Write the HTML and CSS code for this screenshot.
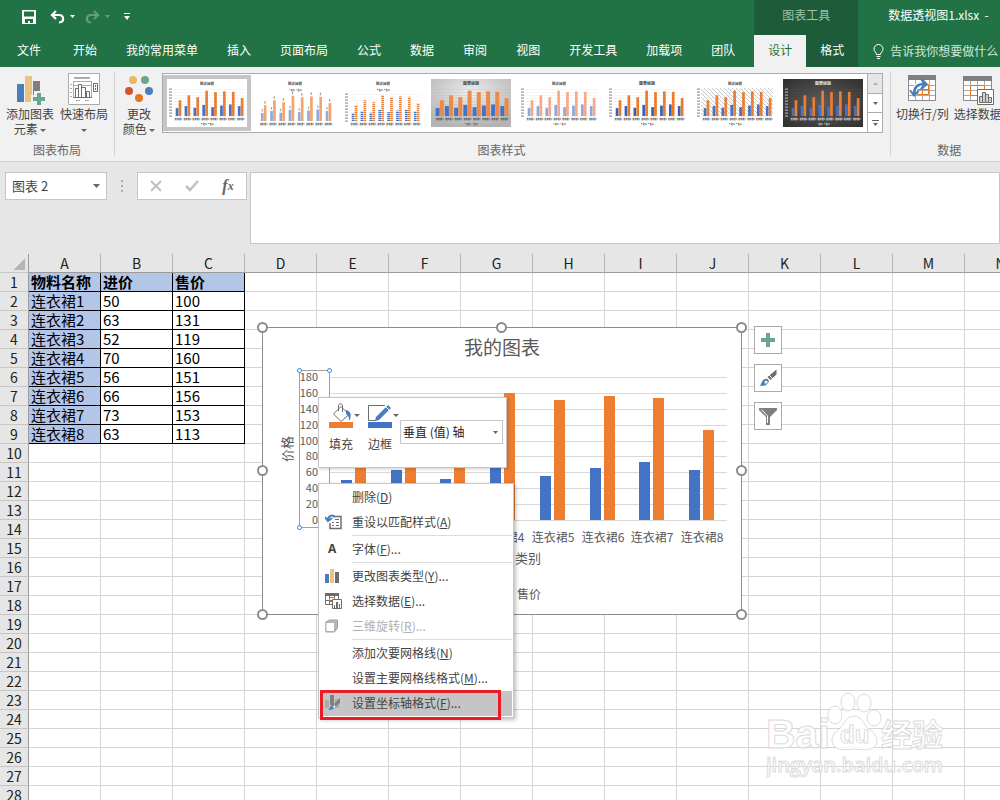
FILE: index.html
```html
<!DOCTYPE html>
<html lang="zh-CN">
<head>
    <meta charset="UTF-8">
    <meta name="viewport" content="width=device-width, initial-scale=1.0">
    <title>数据透视图1.xlsx</title>
    <link rel="stylesheet" href="styles.css">
</head>
<body>

    <header class="titlebar">
        <div class="title-left">
            <div class="quick-access">
                <button class="qa-btn" aria-label="保存">
                    <svg width="14" height="14" viewBox="0 0 14 14"><path fill="#fff" fill-rule="evenodd" d="M0 0h14v14H0zM2 1.500v5h10v-5zM3 9v4h3v-2h2v2h3V9z"/></svg>
                </button>
                <button class="qa-btn" aria-label="撤消">
                    <svg width="15" height="14" viewBox="0 0 15 14"><path d="M6 1L2 5l4 4M2 5h7c5 0 6 7 0 7.500" fill="none" stroke="#fff" stroke-width="2.200"/></svg>
                    <svg class="caret" width="5" height="3" viewBox="0 0 5 3"><path d="M0 0h5L2.500 3z"/></svg>
                </button>
                <button class="qa-btn dim" aria-label="恢复">
                    <svg width="15" height="14" viewBox="0 0 15 14"><path d="M9 1l4 4-4 4M13 5H6C1 5 0 12 6 12.500" fill="none" stroke="#fff" stroke-width="2.200"/></svg>
                    <svg class="caret" width="5" height="3" viewBox="0 0 5 3"><path d="M0 0h5L2.500 3z"/></svg>
                </button>
                <button class="qa-btn" aria-label="自定义快速访问工具栏">
                    <svg width="6" height="7" viewBox="0 0 6 7" fill="#fff"><path d="M0 0h6v1H0zM0 3h6L3 7z"/></svg>
                </button>
            </div>
            <nav class="tabs">
                <a class="tab tab-file" href="#">文件</a>
                <a class="tab" href="#">开始</a>
                <a class="tab" href="#">我的常用菜单</a>
                <a class="tab" href="#">插入</a>
                <a class="tab" href="#">页面布局</a>
                <a class="tab" href="#">公式</a>
                <a class="tab" href="#">数据</a>
                <a class="tab" href="#">审阅</a>
                <a class="tab" href="#">视图</a>
                <a class="tab" href="#">开发工具</a>
                <a class="tab" href="#">加载项</a>
                <a class="tab" href="#">团队</a>
            </nav>
        </div>
        <div class="title-context">
            <div class="context-name">图表工具</div>
            <nav class="context-tabs">
                <a class="context-tab active" href="#">设计</a>
                <a class="context-tab" href="#">格式</a>
            </nav>
        </div>
        <div class="title-right">
            <div class="doc-name">数据透视图1.xlsx &nbsp;-</div>
            <label class="tell-me">
                <svg width="11" height="15" viewBox="0 0 11 15" fill="none" stroke="#fff"><path d="M3.500 10.500c0-2-2.500-3-2.500-5.500a4.500 4.500 0 0 1 9 0c0 2.500-2.500 3.500-2.500 5.500zM3.500 12.500h4M4 14.500h3"/></svg>
                <input type="text" placeholder="告诉我你想要做什么" aria-label="告诉我你想要做什么">
            </label>
        </div>
    </header>

    <section class="ribbon">
        <div class="group">
            <div class="group-body">
                <button class="big-btn">
                    <svg width="30" height="32" viewBox="0 0 30 32">
                        <path fill="#4a7ebb" d="M2 11h7v18H2z"/><path fill="#eac282" d="M10 3h7v26h-7z"/><path fill="#7f7f7f" d="M18 8h7v21h-7z"/>
                        <path fill="#f1f1f1" d="M19 18h7v4h4v7h-4v3h-7v-3h-3v-7h3z"/>
                        <path fill="#6aa58f" d="M22 20h4v4h4v4h-4v4h-4v-4h-4v-4h4z"/>
                    </svg>
                    <span>添加图表<br>元素 <i class="down"></i></span>
                </button>
                <button class="big-btn">
                    <svg width="32" height="32" viewBox="0 0 32 32">
                        <path fill="#fff" stroke="#ababab" d="M.5.500h31v31H.500z"/>
                        <path fill="#ababab" d="M6 4h16v2H6zM8 27h4v1H8zM17 27h4v1h-4zM2 11h2v1H2zM2 15h2v1H2zM2 19h2v1H2zM2 23h2v1H2z"/>
                        <path stroke="#ababab" fill="none" d="M5.500 8.500h18M5.500 12.500h18M5.500 8v16M23.500 8v16"/>
                        <path fill="#fff" stroke="#6d6d6d" d="M7.500 24.500v-9h3v9M10.500 24.500v-13h3v13M13.500 24.500v-10h4v10M18.500 24.500v-6h3v6M5 24.500h19"/>
                        <path stroke="#6d6d6d" fill="#fff" d="M25.500 10.500h4v8h-4z"/><path fill="#6d6d6d" d="M27 12h1v2h-1zM27 15h1v2h-1z"/>
                    </svg>
                    <span>快速布局<br><i class="down"></i></span>
                </button>
            </div>
            <div class="group-name">图表布局</div>
        </div>

        <div class="group group-styles">
            <div class="group-body">
                <button class="big-btn">
                    <svg width="30" height="32" viewBox="0 0 30 32">
                        <circle cx="9" cy="7" r="4" fill="#eab765"/><circle cx="21" cy="7" r="4" fill="#6aa58f"/>
                        <circle cx="5" cy="18" r="4" fill="#d35230"/><circle cx="25" cy="18" r="4" fill="#4a7ebb"/>
                        <circle cx="15" cy="25" r="4" fill="#e3761c"/>
                    </svg>
                    <span>更改<br>颜色 <i class="down"></i></span>
                </button>
                <div class="gallery">
                    <div class="thumbs" id="thumbs"></div>
                    <div class="gallery-scroll">
                        <button class="off" aria-label="上一行"><svg width="5" height="3" viewBox="0 0 5 3"><path d="M0 3h5L2.500 0z"/></svg></button>
                        <button aria-label="下一行"><svg width="5" height="3" viewBox="0 0 5 3"><path d="M0 0h5L2.500 3z"/></svg></button>
                        <button aria-label="其他"><svg width="7" height="6" viewBox="0 0 7 6"><path d="M0 0h7v1H0zM1 3h5L3.500 6z"/></svg></button>
                    </div>
                </div>
            </div>
            <div class="group-name">图表样式</div>
        </div>

        <div class="group">
            <div class="group-body">
                <button class="big-btn">
                    <svg width="30" height="32" viewBox="0 0 30 32">
                        <path fill="#fff" stroke="#8a8a8a" d="M1.500 2.500h27v25h-27z"/><path fill="#7f7f7f" d="M1 2h28v5H1z"/>
                        <path stroke="#ababab" fill="none" d="M2 12.500h26M2 17.500h26M2 22.500h26M8.500 7v20M15.500 7v20M22.500 7v20"/>
                        <path fill="none" stroke="#e3761c" d="M10.500 11.500h11v10h-11zM15.500 12v10M11 16.500h10"/>
                        <path fill="none" stroke="#fff" stroke-width="5" d="M7 21c0-7 4-10 10-10"/>
                        <path fill="none" stroke="#4a7ebb" stroke-width="2.500" d="M7 21c0-7 4-10 10-10"/>
                        <path fill="#4a7ebb" d="M13 6h3l5 5-5 5h-3l3-5zM3 17l4 3 5-3v2l-5 5-4-5z"/>
                    </svg>
                    <span>切换行/列</span>
                </button>
                <button class="big-btn">
                    <svg width="32" height="32" viewBox="0 0 32 32">
                        <path fill="#fff" stroke="#8a8a8a" d="M1.500 3.500h28v24h-28z"/><path fill="#7f7f7f" d="M1 3h29v5H1z"/>
                        <path stroke="#ababab" fill="none" d="M2 12.500h27M2 17.500h27M2 22.500h27M8.500 8v19M15.500 8v19M22.500 8v19"/>
                        <path fill="none" stroke="#e3761c" d="M8.500 12.500h14v10h-14z"/>
                        <path fill="#fff" stroke="#6d6d6d" d="M15.500 16.500h16v15h-16z"/>
                        <path fill="#d0d0d0" stroke="#6d6d6d" d="M17.500 29.500v-6h3v6zM20.500 29.500v-10h3v10zM23.500 29.500v-8h3v8zM26.500 29.500v-5h3v5z"/>
                    </svg>
                    <span>选择数据</span>
                </button>
            </div>
            <div class="group-name">数据</div>
        </div>
    </section>

    <section class="formula-bar">
        <select class="name-box" aria-label="名称框">
            <option>图表 2</option>
        </select>
        <div class="grip"><i></i><i></i><i></i></div>
        <div class="fx-buttons">
            <button aria-label="取消"><svg width="12" height="12" viewBox="0 0 12 12"><path d="M1 1l10 10M11 1L1 11" stroke="#c0c0c0" stroke-width="2"/></svg></button>
            <button aria-label="输入"><svg width="14" height="12" viewBox="0 0 14 12"><path d="M1 6l4 4 8-9" fill="none" stroke="#c0c0c0" stroke-width="2.500"/></svg></button>
            <button class="fx" aria-label="插入函数">f<sub>x</sub></button>
        </div>
        <textarea class="formula" aria-label="编辑栏"></textarea>
    </section>

    <main class="sheet">
        <table class="grid" id="grid"></table>

        <div class="chart">
            <svg id="chart" viewBox="0 0 480 288"></svg>
        </div>

        <div class="chart-tools">
            <button aria-label="图表元素"><svg width="14" height="14" viewBox="0 0 14 14"><path fill="#6aa58f" d="M5 0h4v5h5v4H9v5H5V9H0V5h5z"/></svg></button>
            <button aria-label="图表样式">
                <svg width="18" height="18" viewBox="0 0 18 18"><path fill="#6d6d6d" d="M17.500.500v5L11.500 11l-3-3z"/><path stroke="#fff" d="M10 6l4 4"/><path fill="#4a7ebb" d="M0 17c3-1 2-6 6-7 3-1 5 2 3 4-2 3-6 3-9 3z"/><path fill="#fff" d="M5.500 13.500c0-2 3-2.500 3-.5s-3 2-3 .5z"/></svg>
            </button>
            <button aria-label="图表筛选器">
                <svg width="18" height="17" viewBox="0 0 18 17"><path fill="#7f7f7f" d="M0 0h18v2l-7 7v8H7V9L0 2z"/><path fill="none" stroke="#fff" d="M2.500 1.500l6 6.500v7"/></svg>
            </button>
        </div>

        <div class="mini-toolbar">
            <button class="mini-btn">
                <span class="mini-icon">
                    <svg width="24" height="25" viewBox="0 0 24 25"><path fill="#fff" stroke="#6d6d6d" d="M12 3.500l8 8-8 7-7.500-7.500z"/><path fill="none" stroke="#6d6d6d" d="M9.500 8V3c0-3 4-3 4 0v6"/><path fill="#4a7ebb" d="M17 7c5 1 6 6 3 11 0-3 0-5-3-7z"/><path fill="#ed7d31" d="M0 19h24v6H0z"/></svg>
                    <i class="down"></i>
                </span>
                <span>填充</span>
            </button>
            <button class="mini-btn">
                <span class="mini-icon">
                    <svg width="24" height="25" viewBox="0 0 24 25"><path fill="none" stroke="#6d6d6d" d="M17 2.500H.500v15H8"/><path fill="#4a7ebb" d="M8 14L20 2l3 3-12 12-4 1z"/><path stroke="#fff" d="M18 4l3 3"/><path fill="#4472c4" d="M0 19h24v6H0z"/></svg>
                    <i class="down"></i>
                </span>
                <span>边框</span>
            </button>
            <select class="mini-select" aria-label="图表元素">
                <option>垂直 (值) 轴</option>
            </select>
        </div>

        <div class="menu" role="menu">
            <button class="menu-item"><span class="menu-icon"></span>删除(<u>D</u>)</button>
            <button class="menu-item">
                <span class="menu-icon"><svg width="17" height="16" viewBox="0 0 17 16"><path fill="#fff" stroke="#6d6d6d" stroke-width="1.500" d="M8 2.500h8v12H5V9"/><path fill="none" stroke="#6d6d6d" d="M7 8.500h2M11 8.500h3M7 11.500h2M11 11.500h3M10 5.500h4"/><path fill="none" stroke="#4a7ebb" stroke-width="2" d="M10 3C7 0 3 2 3 6M0 3l3 4 4-3"/></svg></span>
                重设以匹配样式(<u>A</u>)
            </button>
            <hr>
            <button class="menu-item"><span class="menu-icon letter">A</span>字体(<u>F</u>)...</button>
            <hr>
            <button class="menu-item">
                <span class="menu-icon"><svg width="15" height="14" viewBox="0 0 15 14"><path fill="#4a7ebb" d="M0 5h4v9H0z"/><path fill="#eac282" d="M5 0h4v14H5z"/><path fill="#6d6d6d" d="M10 3h4v11h-4z"/></svg></span>
                更改图表类型(<u>Y</u>)...
            </button>
            <button class="menu-item">
                <span class="menu-icon"><svg width="17" height="16" viewBox="0 0 17 16"><path fill="#fff" stroke="#6d6d6d" d="M.5.500h13v11H.500zM.500 7.500h13M4.500 3v8M9.500 3v8"/><path fill="#6d6d6d" d="M0 0h14v3H0z"/><path fill="none" stroke="#e3761c" d="M4.500 4.500h5v4h-5z"/><path fill="#fff" stroke="#6d6d6d" d="M7.500 6.500h9v9h-9z"/><path fill="#6d6d6d" d="M9 12h1v3H9zM11 9h2v6h-2zM14 11h1v4h-1z"/></svg></span>
                选择数据(<u>E</u>)...
            </button>
            <button class="menu-item" disabled>
                <span class="menu-icon"><svg width="14" height="14" viewBox="0 0 14 14"><path fill="#b8b8b8" stroke="#a0a0a0" d="M1 3l3-2h8.500v8l-3 4H1z"/><path fill="#fff" stroke="#b0b0b0" d="M1 3.500h8.500v9H1z"/></svg></span>
                三维旋转(<u>R</u>)...
            </button>
            <hr>
            <button class="menu-item"><span class="menu-icon"></span>添加次要网格线(<u>N</u>)</button>
            <button class="menu-item"><span class="menu-icon"></span>设置主要网格线格式(<u>M</u>)...</button>
            <button class="menu-item hover">
                <span class="menu-icon"><svg width="16" height="16" viewBox="0 0 16 16"><path fill="#aaa" d="M0 5h4v8H0zM10 4h4v9h-4z"/><path fill="#808080" d="M5 0h4v10H5zM15 3v5l-4 3-2-2z"/><path fill="#4a7ebb" d="M3 15c2-1 2-5 5-5 3 1 3 5-5 5z"/><circle cx="9" cy="12" r="1" fill="#fff"/></svg></span>
                设置坐标轴格式(<u>F</u>)...
            </button>
            <div class="callout"></div>
        </div>

        <svg class="watermark" width="182" height="92" viewBox="0 0 182 92">
            <text class="wm-logo" x="0" y="58">Bai</text>
            <ellipse cx="69" cy="25" rx="7" ry="9"/>
            <ellipse cx="82" cy="12" rx="7" ry="9"/>
            <ellipse cx="98" cy="13" rx="7" ry="9"/>
            <ellipse cx="108" cy="28" rx="7" ry="8"/>
            <path d="M88 26c8 0 9 8 15 13 6 4 10 10 7 16-3 6-12 5-22 4-9 1-16 2-20-3-5-7 0-13 5-17 6-5 7-13 15-13z"/>
            <text class="wm-du" x="74" y="53">du</text>
            <text class="wm-cn" x="115" y="56">经验</text>
            <text class="wm-url" x="0" y="82">jingyan.baidu.com</text>
        </svg>
    </main>

    <script src="script.js"></script>
</body>
</html>
```
FILE: styles.css
```css
* {
    box-sizing: border-box;
}

body {
    margin: 0;
    height: 100vh;
    display: flex;
    flex-direction: column;
    overflow: hidden;
    background-color: #e6e6e6;
    color: #444;
    font-family: 'Noto Sans CJK SC', sans-serif;
    font-size: 12px;
    line-height: 16px;
}

button,
input,
select,
textarea {
    font: inherit;
    color: inherit;
    margin: 0;
    padding: 0;
    border: none;
    background: none;
    border-radius: 0;
    appearance: none;
}

svg {
    display: block;
    flex: none;
}

a {
    color: inherit;
    text-decoration: none;
}

/* Title bar and tabs */
.titlebar {
    flex: none;
    display: flex;
    height: 67px;
    background-color: #217346;
    color: #fff;
    white-space: nowrap;
}

.title-left,
.title-context,
.title-right {
    display: flex;
    flex-direction: column;
    flex: none;
}

.title-right {
    flex: 1;
    min-width: 0;
    overflow: hidden;
}

.quick-access {
    height: 33px;
    margin-bottom: 2px;
    display: flex;
    align-items: center;
    gap: 14px;
    padding-left: 22px;
}

.qa-btn {
    display: flex;
    align-items: center;
    gap: 5px;
}

.qa-btn + .qa-btn.dim {
    margin-left: -4px;
}

.qa-btn.dim {
    opacity: 0.3;
}

.caret {
    fill: #fff;
}

.tabs {
    display: flex;
    gap: 29px;
    padding: 0 19px 0 17px;
    line-height: 30px;
}

.tab-file {
    margin-right: 3px;
}

.title-context {
    background-color: #1e5c39;
}

.context-name {
    height: 35px;
    line-height: 30px;
    text-align: center;
    color: #9fc3ad;
}

.context-tabs {
    display: flex;
    flex: 1;
}

.context-tab {
    padding: 0 14px;
    line-height: 30px;
}

.context-tab.active {
    background-color: #f1f1f1;
    color: #217346;
}

.doc-name {
    height: 35px;
    line-height: 30px;
    padding-left: 30px;
}

.tell-me {
    display: flex;
    align-items: center;
    gap: 6px;
    height: 32px;
    padding-left: 15px;
    color: #d3e5da;
}

.tell-me input {
    flex: 1;
    min-width: 0;
}

.tell-me input::placeholder {
    color: #d3e5da;
}

/* Ribbon */
.ribbon {
    flex: none;
    display: flex;
    height: 95px;
    overflow: hidden;
    background-color: #f1f1f1;
    border-bottom: 1px solid #d2d2d2;
}

.group {
    flex: none;
    display: flex;
    flex-direction: column;
    justify-content: space-between;
    position: relative;
    padding: 6px 6px 3px 5px;
}

.group-styles {
    padding-right: 8px;
}

.group::after {
    content: '';
    position: absolute;
    top: 4px;
    bottom: 5px;
    right: 0;
    width: 1px;
    background-color: #d2d2d2;
}

.group-body {
    display: flex;
    gap: 4px;
}

.group-name {
    color: #666;
    text-align: center;
}

.big-btn {
    display: flex;
    flex-direction: column;
    align-items: center;
    gap: 1px;
    min-width: 50px;
    line-height: 15px;
    white-space: nowrap;
}

.group-styles .big-btn {
    min-width: 38px;
}

.down {
    display: inline-block;
    vertical-align: middle;
    border: 3px solid transparent;
    border-top-color: #666;
    border-bottom: none;
}

.gallery {
    display: flex;
    height: 60px;
    background-color: #fff;
    border: 1px solid #ababab;
}

.thumbs {
    display: flex;
    padding-top: 1px;
}

.thumb {
    width: 88px;
    height: 56px;
    border: 4px solid transparent;
}

.thumb.selected {
    border-color: #c5c5c5;
}

.gallery-scroll {
    width: 15px;
    display: flex;
    flex-direction: column;
    border-left: 1px solid #ababab;
}

.gallery-scroll button {
    flex: 1;
    display: flex;
    align-items: center;
    justify-content: center;
    fill: #666;
}

.gallery-scroll button + button {
    border-top: 1px solid #ababab;
}

.gallery-scroll .off {
    background-color: #e6e6e6;
    fill: #b0b0b0;
}

/* Formula bar */
.formula-bar {
    flex: none;
    display: flex;
    align-items: flex-start;
    padding: 10px 0 10px 5px;
}

.name-box,
.fx-buttons,
.formula {
    background-color: #fff;
    border: 1px solid #c6c6c6;
}

.name-box,
.mini-select {
    background: #fff url("data:image/svg+xml,%3Csvg xmlns='http://www.w3.org/2000/svg' width='7' height='4'%3E%3Cpath fill='%23666' d='M0 0h7L3.500 4z'/%3E%3C/svg%3E") no-repeat right 6px center;
}

.name-box {
    width: 102px;
    height: 28px;
    padding-left: 6px;
    font-size: 13px;
}

.grip {
    width: 30px;
    height: 28px;
    display: flex;
    flex-direction: column;
    align-items: center;
    justify-content: center;
    gap: 3px;
}

.grip i {
    width: 2px;
    height: 2px;
    background-color: #ababab;
}

.fx-buttons {
    width: 110px;
    height: 28px;
    display: flex;
}

.fx-buttons button {
    flex: 1;
    display: flex;
    align-items: center;
    justify-content: center;
}

.fx-buttons .fx {
    font-family: 'Liberation Serif', serif;
    font-size: 16px;
    font-style: italic;
    font-weight: bold;
    color: #666;
}

.fx sub {
    font-size: 12px;
}

.formula {
    flex: 1;
    height: 72px;
    margin-left: 3px;
    resize: none;
}

/* Sheet */
.sheet {
    flex: 1;
    min-height: 0;
    position: relative;
    overflow: hidden;
    background-color: #fff;
}

.grid {
    table-layout: fixed;
    width: 1901px;
    border-collapse: separate;
    border-spacing: 0;
    font-size: 15px;
    line-height: 18px;
    color: #222;
}

.grid th,
.grid td {
    width: 72px;
    height: 19px;
    padding: 0;
    border-right: 1px solid #d4d4d4;
    border-bottom: 1px solid #d4d4d4;
    white-space: nowrap;
}

.grid th {
    background-color: #e6e6e6;
    font-weight: normal;
    font-size: 14px;
    text-align: center;
}

.grid .col-head {
    border-right-color: #b5b5b5;
    border-bottom-color: #9b9b9b;
}

.grid .row-head {
    width: 29px;
    border-right-color: #9b9b9b;
    border-bottom-color: #c6c6c6;
}

.grid .corner {
    background-image: linear-gradient(135deg, transparent 50%, #b4b4b4 50%);
    background-size: 11px 11px;
    background-repeat: no-repeat;
    background-position: 14px 5px;
}

.grid .filled {
    padding-left: 2px;
    border-color: #000;
    color: #000;
}

.grid .shaded {
    background-color: #b4c6e7;
}

.grid .title {
    font-weight: bold;
}

/* Chart placed over the cells */
.chart {
    position: absolute;
    left: 262px;
    top: 73px;
    width: 480px;
    height: 288px;
    background-color: #fff;
}

.chart svg {
    overflow: visible;
}

.chart text {
    fill: #595959;
}

.axis-number {
    font-size: 11px;
}

.axis-text {
    font-size: 12px;
}

.axis-title {
    font-size: 13px;
}

.chart-title {
    font-size: 19px;
}

.frame {
    fill: none;
    stroke: #8c8c8c;
}

.axis-frame {
    fill: none;
    stroke: #a0a0a0;
}

.handle {
    fill: #fff;
    stroke: #8c8c8c;
    stroke-width: 2;
}

.axis-handle {
    fill: #fff;
    stroke: #2b88d8;
    stroke-width: 1;
}

.chart-tools {
    position: absolute;
    left: 754px;
    top: 72px;
    display: flex;
    flex-direction: column;
    gap: 10px;
}

.chart-tools button {
    width: 28px;
    height: 28px;
    display: flex;
    align-items: center;
    justify-content: center;
    background-color: #fff;
    border: 1px solid #ababab;
}

/* Floating toolbar */
.mini-toolbar {
    position: absolute;
    left: 318px;
    top: 143px;
    height: 71px;
    display: flex;
    align-items: flex-start;
    padding: 5px 3px 0 10px;
    background-color: #fff;
    border: 1px solid #c6c6c6;
    box-shadow: 1px 1px 3px rgba(0, 0, 0, 0.2);
}

.mini-btn {
    display: flex;
    flex-direction: column;
    align-items: flex-start;
    gap: 8px;
    width: 39px;
}

.mini-btn + .mini-btn {
    width: 32px;
}

.mini-icon {
    display: flex;
    align-items: center;
    gap: 1px;
}

.mini-select {
    width: 103px;
    height: 24px;
    margin-top: 17px;
    padding-left: 2px;
    border: 1px solid #c6c6c6;
    background-position: right 4px center;
    background-size: 5px 3px;
    color: #222;
}

/* Context menu */
.menu {
    position: absolute;
    left: 318px;
    top: 229px;
    width: 196px;
    padding: 1px;
    background-color: #fff;
    border: 1px solid #c6c6c6;
    box-shadow: 2px 2px 4px rgba(0, 0, 0, 0.25);
}

.menu-item {
    display: flex;
    align-items: center;
    width: 100%;
    height: 25px;
    padding-bottom: 1px;
    color: #444;
    white-space: nowrap;
}

.menu-item:disabled {
    color: #b0b0b0;
}

.menu-item:hover,
.menu-item.hover {
    background-color: #c5c5c5;
}

.menu-icon {
    width: 27px;
    margin-right: 5px;
    padding-left: 5px;
    flex: none;
}

.menu-icon.letter {
    padding-left: 8px;
    font-family: 'Open Sans', sans-serif;
    font-weight: bold;
    text-align: left;
}

.menu hr {
    height: 1px;
    margin: 0 0 1px 32px;
    border: none;
    background-color: #dcdcdc;
}

.callout {
    position: absolute;
    left: 1px;
    bottom: -3px;
    width: 181px;
    height: 30px;
    border: 3px solid #ec1c24;
    pointer-events: none;
}

/* Watermark */
.watermark {
    position: absolute;
    left: 766px;
    top: 436px;
    fill: #fff;
    stroke: #d6d6d6;
    stroke-width: 1;
    opacity: 0.85;
    pointer-events: none;
}

.wm-logo {
    font: bold 41px 'Liberation Sans', sans-serif;
}

.wm-du {
    font: bold 24px 'Liberation Sans', sans-serif;
}

.wm-cn {
    font-size: 31px;
    font-weight: bold;
}

.wm-url {
    font: 600 20px 'Open Sans', sans-serif;
}
```
FILE: script.js
```js
// Rows of the sheet, also used by the chart and the style thumbnails
const rows = [
    ['连衣裙1', 50, 100],
    ['连衣裙2', 63, 131],
    ['连衣裙3', 52, 119],
    ['连衣裙4', 70, 160],
    ['连衣裙5', 56, 151],
    ['连衣裙6', 66, 156],
    ['连衣裙7', 73, 153],
    ['连衣裙8', 63, 113]
];
const headings = ['物料名称', '进价', '售价'];

// Build the grid: 26 columns, 60 rows
function buildGrid() {
    let html = '<tr><th class="row-head col-head corner"></th>';
    for (let c = 0; c < 26; c++) {
        html += `<th class="col-head">${String.fromCharCode(65 + c)}</th>`;
    }
    html += '</tr>';
    for (let r = 0; r < 60; r++) {
        html += `<tr><th class="row-head">${r + 1}</th>`;
        for (let c = 0; c < 26; c++) {
            if (r <= rows.length && c < 3) {
                const value = r === 0 ? headings[c] : rows[r - 1][c];
                const shaded = r === 0 || c === 0 ? ' shaded' : '';
                const title = r === 0 ? ' title' : '';
                html += `<td class="filled${shaded}${title}">${value}</td>`;
            } else {
                html += '<td></td>';
            }
        }
        html += '</tr>';
    }
    document.getElementById('grid').innerHTML = html;
}

function rect(x, y, w, h, fill) {
    return `<rect x="${x}" y="${y}" width="${w}" height="${h}" fill="${fill}"/>`;
}

// Main chart
function buildChart() {
    const left = 67;
    const right = 465;
    const base = 193;
    const step = (right - left) / rows.length;
    const scale = 143 / 180;
    let svg = '';

    for (let v = 0; v <= 180; v += 20) {
        const y = Math.round(base - v * scale);
        svg += rect(left, y, right - left, 1, '#d9d9d9');
        svg += `<text class="axis-number" x="56" y="${y + 4}" text-anchor="end">${v}</text>`;
    }
    rows.forEach((row, i) => {
        const mid = Math.round(left + step * (i + 0.5));
        const low = Math.round(row[1] * scale);
        const high = Math.round(row[2] * scale);
        svg += rect(mid - 13, base - low, 11, low, '#4472c4');
        svg += rect(mid + 1, base - high, 11, high, '#ed7d31');
        svg += `<text class="axis-text" x="${mid}" y="215" text-anchor="middle">${row[0]}</text>`;
    });

    svg += '<text class="chart-title" x="240" y="28" text-anchor="middle">我的图表</text>';
    svg += '<text class="axis-title" x="266" y="236" text-anchor="middle">类别</text>';
    svg += '<text class="axis-title" transform="translate(30 122) rotate(-90)" text-anchor="middle">价格</text>';
    svg += rect(199, 264, 6, 6, '#4472c4') + '<text class="axis-text" x="208" y="272">进价</text>';
    svg += rect(246, 264, 6, 6, '#ed7d31') + '<text class="axis-text" x="255" y="272">售价</text>';

    svg += '<rect class="axis-frame" x="37.5" y="43.5" width="30" height="157"/>';
    [[37, 43], [67, 43], [37, 200], [67, 200]].forEach(([x, y]) => {
        svg += `<circle class="axis-handle" cx="${x + 0.5}" cy="${y + 0.5}" r="2"/>`;
    });
    svg += '<rect class="frame" x="0.5" y="0.5" width="479" height="287"/>';
    [0, 239, 479].forEach(x => {
        [0, 143, 287].forEach(y => {
            if (x === 239 && y === 143) return;
            svg += `<circle class="handle" cx="${x + 0.5}" cy="${y + 0.5}" r="4.5"/>`;
        });
    });
    document.getElementById('chart').innerHTML = svg;
}

// Chart style gallery
const styles = [
    { low: '#4472c4', high: '#ed7d31' },
    { low: '#8faadc', high: '#f4a56f', legendTop: true, noAxis: true, labels: true },
    { low: '#4472c4', high: '#ed7d31', legendTop: true, striped: true },
    { low: '#4472c4', high: '#ed8a48', bg: 'url(#greyBg)', grid: '#b8b8b8', noAxis: true, wide: true, bold: true },
    { low: '#8ea6dc', high: '#f5a988' },
    { low: '#3462bb', high: '#ee7a22', bold: true },
    { low: '#4472c4', high: '#ed7d31', bg: 'url(#hatchBg)' },
    { low: '#4472c4', high: '#ed7d31', bg: 'url(#darkBg)', ink: '#e6e6e6', grid: '#555', bold: true }
];

const defs = `<defs>
    <radialGradient id="greyBg" cy="0.3" r="0.7"><stop offset="0" stop-color="#eee"/><stop offset="1" stop-color="#b4b4b4"/></radialGradient>
    <radialGradient id="darkBg" r="0.7"><stop offset="0" stop-color="#5c5c5c"/><stop offset="1" stop-color="#303030"/></radialGradient>
    <pattern id="hatchBg" width="4" height="4" patternUnits="userSpaceOnUse"><rect width="4" height="4" fill="#fff"/><path d="M0 0l4 4" stroke="#bbb" stroke-width="0.8"/></pattern>
</defs>`;

function drawThumb(style) {
    const ink = style.ink || '#444';
    const base = style.legendTop ? 42 : 37;
    const left = style.noAxis ? 4 : 7;
    const step = (78 - left) / 8;
    const width = style.wide ? 4 : 2.7;
    let svg = defs + rect(0, 0, 80, 48, '#fff');

    if (style.bg === 'url(#hatchBg)') {
        svg += rect(6, 9, 72, 28, style.bg);
    } else if (style.bg) {
        svg += rect(0, 0, 80, 48, style.bg);
    }
    svg += `<text x="40" y="6" font-size="${style.bold ? 4 : 3.5}" font-weight="bold" fill="${ink}" text-anchor="middle">图表标题</text>`;
    for (let i = 0; i <= 9; i++) {
        const y = base - i * 3;
        if (!style.labels) svg += rect(left, y, 78 - left, 0.3, style.grid || '#ddd');
        if (!style.noAxis) svg += rect(2, y - 0.5, 3, 1.2, style.ink ? '#aaa' : '#999');
    }
    rows.forEach((row, i) => {
        const mid = left + step * (i + 0.5);
        const low = row[1] * 0.158;
        const high = row[2] * 0.158;
        svg += rect(mid - width, base - low, width, low, style.low);
        svg += rect(mid + 0.2, base - high, width, high, style.high);
        if (style.labels) {
            svg += rect(mid - 2, base - low - 4, 1.2, 2.5, '#aaa');
            svg += rect(mid + 0.7, base - high - 4, 1.2, 2.5, '#999');
        }
        svg += `<text x="${mid}" y="${base + 4}" font-size="2.2" font-weight="bold" fill="${ink}" text-anchor="middle">${row[0]}</text>`;
    });
    if (style.striped) {
        for (let y = 18; y < base; y += 2) {
            svg += rect(left, y, 71, 0.7, '#fff');
        }
    }
    const legendY = style.legendTop ? 10 : 44;
    svg += rect(34, legendY, 1, 1, style.low) + rect(41, legendY, 1, 1, style.high);
    svg += `<text x="35.5" y="${legendY + 1.6}" font-size="2.2" font-weight="bold" fill="${ink}">进价</text>`;
    svg += `<text x="42.5" y="${legendY + 1.6}" font-size="2.2" font-weight="bold" fill="${ink}">售价</text>`;
    return `<svg width="80" height="48" viewBox="0 0 80 48">${svg}</svg>`;
}

function buildThumbs() {
    document.getElementById('thumbs').innerHTML = styles.map((style, i) =>
        `<button class="thumb${i === 0 ? ' selected' : ''}" aria-label="样式 ${i + 1}">${drawThumb(style)}</button>`
    ).join('');
}

buildGrid();
buildChart();
buildThumbs();
```
